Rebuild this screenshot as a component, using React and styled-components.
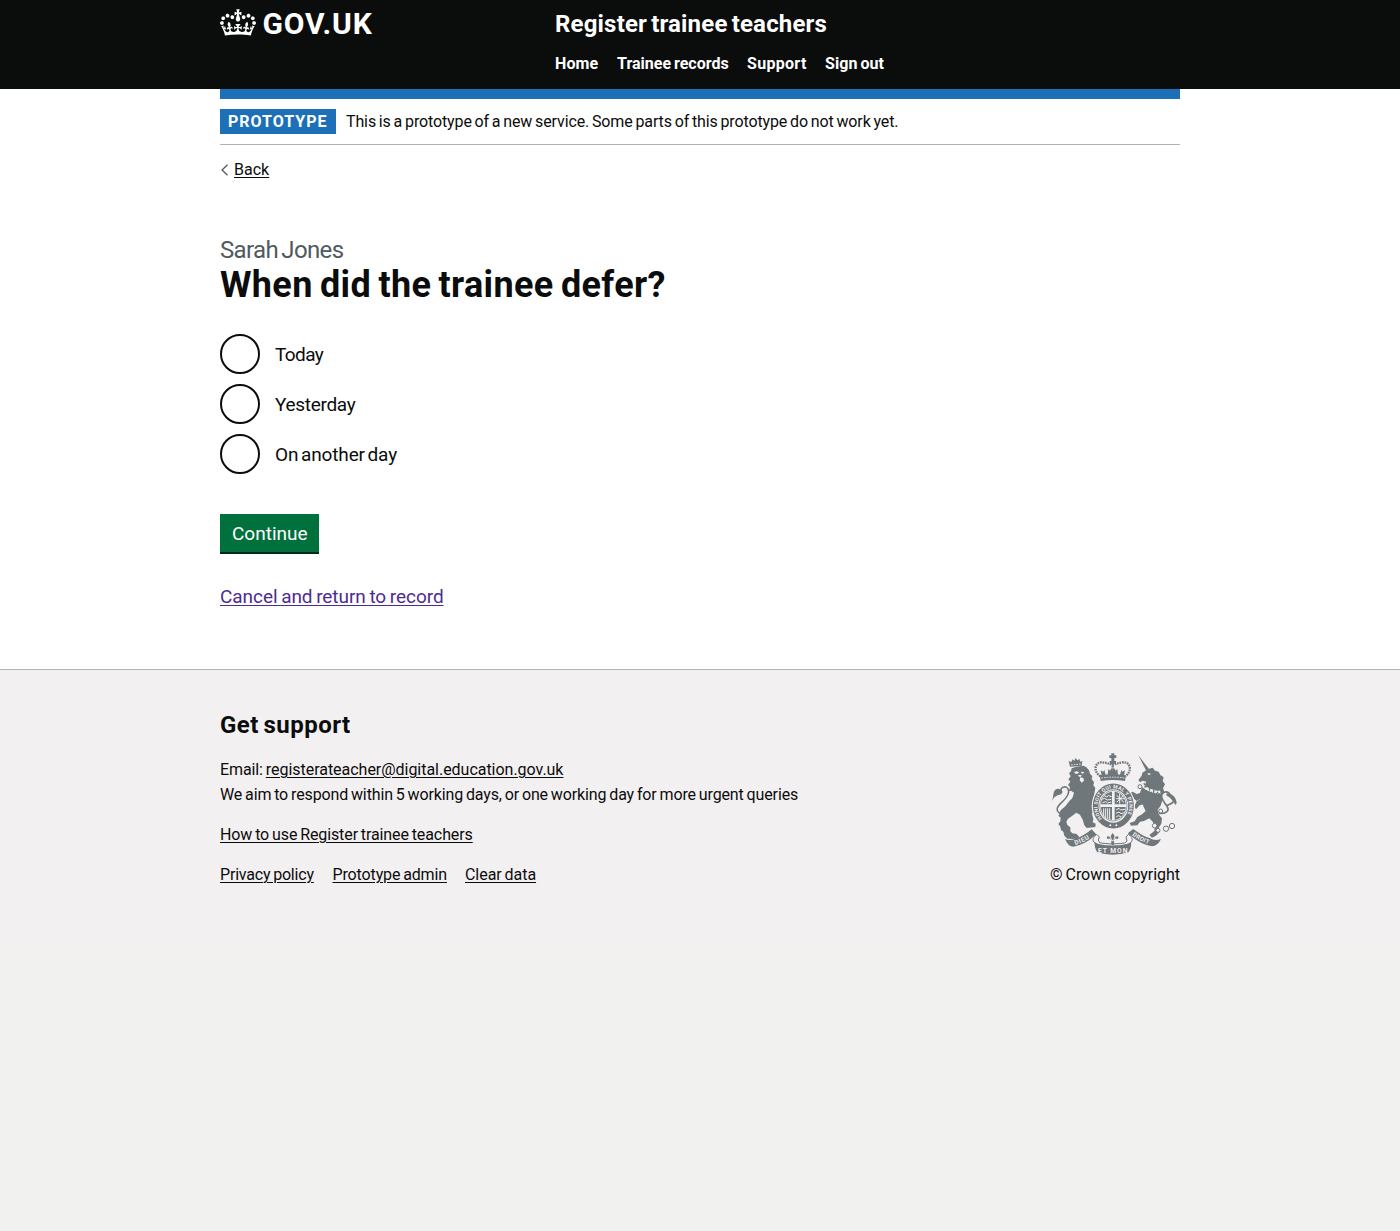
import React from "react";
import styled, { createGlobalStyle } from "styled-components";

const GlobalStyle = createGlobalStyle`
  html { background: #f1f1ef; }
  body {
    margin: 0;
    background: #f1f1ef;
    color: #0b0c0c;
    font-family: Roboto, "Noto Sans", sans-serif;
    -webkit-font-smoothing: antialiased;
  }
  * { box-sizing: border-box; }
`;

const Text = styled.span`
  letter-spacing: ${(p) => p.$track || 0}px;
  word-spacing: ${(p) => p.$word || 0}px;
  white-space: pre;
`;

const Container = styled.div`
  width: 960px;
  margin: 0 auto;
`;

const Header = styled.header`
  height: 89px;
  background: #0b0c0c;
  color: #fff;
`;

const HeaderRow = styled(Container)`
  display: grid;
  grid-template-columns: 335px 1fr;
`;

const Logo = styled.a`
  display: flex;
  align-items: flex-start;
  gap: 6.5px;
  padding-top: 9px;
  color: #fff;
  text-decoration: none;
  svg { display: block; }
`;

const LogoType = styled(Text)`
  font: 700 30px/30px Roboto, sans-serif;
`;

const ServiceName = styled(Text)`
  display: block;
  padding-top: 9px;
  font-size: 24px;
  line-height: 30px;
  font-weight: 700;
`;

const Nav = styled.nav`
  display: flex;
  padding-top: 15px;
  font-size: 16px;
  line-height: 20px;
  font-weight: 700;
`;

const NavItem = styled.a`
  width: ${(p) => p.$w}px;
  color: #fff;
  text-decoration: none;
`;

const Main = styled.div`
  background: #fff;
  height: 580px;
`;

const BlueBar = styled.div`
  height: 10px;
  background: #1d70b8;
`;

const PhaseBanner = styled.div`
  display: flex;
  align-items: center;
  gap: 10px;
  height: 46px;
  border-bottom: 1px solid #b1b4b6;
  font-size: 16px;
  line-height: 20px;
`;

const Tag = styled.strong`
  width: 116px;
  height: 25px;
  padding-left: 8px;
  background: #1d70b8;
  color: #fff;
  line-height: 25px;
`;

const Link = styled.a`
  color: ${(p) => p.$color || "#0b0c0c"};
  text-decoration: underline;
  text-decoration-thickness: 1px;
  text-underline-offset: 2px;
`;

const BackRow = styled.div`
  display: flex;
  align-items: center;
  gap: 5px;
  margin-top: 15px;
  height: 20px;
  font-size: 16px;
  line-height: 20px;
`;

const Caption = styled.span`
  display: block;
  margin-top: 55px;
  color: #505a5f;
  font-size: 24px;
  line-height: 30px;
`;

const Title = styled.h1`
  margin: 0 0 29px;
  font-size: 36px;
  line-height: 40px;
  font-weight: 700;
`;

const Radios = styled.div`
  display: flex;
  flex-direction: column;
  gap: 10px;
`;

const Radio = styled.label`
  display: flex;
  align-items: center;
  gap: 15px;
  font-size: 19px;
  line-height: 25px;
`;

const RadioRing = styled.span`
  width: 40px;
  height: 40px;
  border: 2px solid #0b0c0c;
  border-radius: 50%;
`;

const Button = styled.button`
  display: block;
  width: 99px;
  height: 38px;
  margin: 40px 0 0;
  padding: 1px 0 0 12px;
  border: 0;
  background: #00703c;
  box-shadow: 0 2px 0 #002d18;
  color: #fff;
  font: 400 19px/38px Roboto, sans-serif;
  text-align: left;
`;

const CancelRow = styled.p`
  margin: 32px 0 0;
  font-size: 19px;
  line-height: 25px;
`;

const Footer = styled.footer`
  height: 283px;
  border-top: 1px solid #b1b4b6;
  background: #f3f0f1;
`;

const FooterRow = styled(Container)`
  display: flex;
  justify-content: space-between;
  align-items: flex-end;
  height: 217px;
  font-size: 16px;
`;

const FooterHeading = styled.h2`
  margin: 0 0 17px;
  font-size: 24px;
  line-height: 30px;
`;

const FooterText = styled.p`
  margin: 0 0 15px;
  line-height: 25px;
`;

const FooterLinks = styled.div`
  display: flex;
  line-height: 25px;
`;

const FooterItem = styled.span`
  width: ${(p) => p.$w}px;
`;

const Copyright = styled.div`
  display: flex;
  flex-direction: column;
  align-items: flex-end;
  line-height: 25px;
  svg { display: block; margin: 0 3px 7px 0; }
`;

function Crown() {
  return (
    <svg width="36" height="27" viewBox="0 0 132 97" fill="#fff" aria-hidden="true">
      <path d="M25 30.2c3.5 1.5 7.7-.2 9.1-3.7 1.5-3.6-.2-7.8-3.9-9.2-3.6-1.4-7.6.3-9.1 3.9-1.4 3.5.3 7.5 3.9 9zM9 39.5c3.6 1.5 7.8-.2 9.2-3.7 1.5-3.6-.2-7.8-3.9-9.1-3.6-1.5-7.6.2-9.1 3.8-1.4 3.5.3 7.5 3.8 9zM4.4 57.2c3.5 1.5 7.7-.2 9.1-3.8 1.5-3.6-.2-7.7-3.9-9.1-3.5-1.5-7.6.3-9.1 3.8-1.4 3.5.3 7.6 3.9 9.1zm38.3-21.4c3.5 1.5 7.7-.2 9.1-3.8 1.5-3.6-.2-7.7-3.9-9.1-3.6-1.5-7.6.3-9.1 3.8-1.3 3.6.4 7.7 3.9 9.1zm64.4-5.6c-3.6 1.5-7.8-.2-9.1-3.7-1.5-3.6.2-7.8 3.8-9.2 3.6-1.4 7.7.3 9.2 3.9 1.3 3.5-.4 7.5-3.9 9zm15.9 9.3c-3.6 1.5-7.7-.2-9.1-3.7-1.5-3.6.2-7.8 3.7-9.1 3.6-1.5 7.7.2 9.2 3.8 1.5 3.5-.3 7.5-3.8 9zm4.7 17.7c-3.6 1.5-7.8-.2-9.2-3.8-1.5-3.6.2-7.7 3.9-9.1 3.6-1.5 7.7.3 9.2 3.8 1.3 3.5-.4 7.6-3.9 9.1zM89.3 35.8c-3.6 1.5-7.8-.2-9.2-3.8-1.4-3.6.2-7.7 3.9-9.1 3.6-1.5 7.7.3 9.2 3.8 1.4 3.6-.3 7.7-3.9 9.1zM69.7 17.7l8.9 4.7V9.3l-8.9 2.8c-.2-.3-.5-.6-.9-.9L72.4 0H59.6l3.5 11.2c-.3.3-.6.5-.9.9l-8.8-2.8v13.1l8.8-4.7c.3.3.6.7.9.9l-5 15.4v.1c-.2.8-.4 1.6-.4 2.4 0 4.1 3.1 7.5 7 8.1h.2c.3 0 .7.1 1 .1.4 0 .7 0 1-.1h.2c4-.6 7.1-4.1 7.1-8.1 0-.8-.1-1.7-.4-2.4V34l-5.1-15.4c.4-.2.7-.6 1-.9zM66 92.8c16.9 0 32.8 1.1 47.1 3.2 4-16.9 8.9-26.7 14-33.5l-9.6-3.4c1 4.9 1.1 7.2 0 10.2-1.5-1.4-3-4.3-4.2-8.7L108.6 76c2.8-2 5-3.2 7.5-3.3-4.4 9.4-10 11.9-13.6 11.2-4.3-.8-6.3-4.6-5.6-7.9 1-4.7 5.7-5.9 8-.5 4.3-8.7-3-11.4-7.6-8.8 7.1-7.2 7.9-13.5 2.1-21.1-8 6.1-8.1 12.3-4.5 20.8-4.7-5.4-12.1-2.5-9.5 6.2 3.4-5.2 7.9-2 7.2 3.1-.6 4.3-6.4 7.8-13.5 7.2-10.3-.9-10.9-8-11.2-13.8 2.5-.5 7.1 1.8 11 7.3L80.2 60c-4.1 4.4-8 5.3-12.3 5.4 1.4-4.4 8-11.6 8-11.6H55.5s6.4 7.2 7.9 11.6c-4.2-.1-8-1-12.3-5.4l1.4 16.4c3.9-5.5 8.5-7.7 10.9-7.3-.3 5.8-.9 12.8-11.1 13.8-7.2.6-12.9-2.9-13.5-7.2-.7-5 3.8-8.3 7.1-3.1 2.7-8.7-4.6-11.6-9.4-6.2 3.7-8.5 3.6-14.7-4.6-20.8-5.8 7.6-5 13.9 2.2 21.1-4.7-2.6-11.9.1-7.7 8.8 2.3-5.5 7.1-4.2 8.1.5.7 3.3-1.3 7.1-5.7 7.9-3.5.7-9-1.8-13.5-11.2 2.5.1 4.7 1.3 7.5 3.3l-4.7-15.4c-1.2 4.4-2.7 7.2-4.3 8.7-1.1-3-.9-5.3 0-10.2l-9.5 3.4c5 6.9 9.9 16.7 14 33.5 14.8-2.1 30.8-3.2 47.7-3.2z" />
    </svg>
  );
}

const INK = "#6f777b";
const PAPER = "#f3f0f1";

function Crest() {
  return (
    <svg width="125" height="102" viewBox="36 24 375 306" aria-hidden="true">
      <defs>
        <path id="garter" d="M186 221A47.500 53.500 0 1 1 254 221" />
        <path id="dieu" d="M106 300Q134 292 162 271" />
        <path id="droit" d="M276 271Q304 292 338 300" />
      </defs>
      <g fill={INK}>
        {/* lion */}
        <path d="M95 70L109 65 131 62 139 67 147 76 150 86 157 94 155 102 162 112 160 121 166 129 164 141 160 161 163 181 160 195 156 207 160 222 158 232 167 236 166 246 140 249 133 241 128 224 120 209 109 203 96 213 84 221 79 230 82 240 91 247 91 259 97 265 110 267 117 275 111 282 82 281 73 272 70 260 63 255 61 245 55 237 61 229 62 218 55 212 63 203 69 192 82 182 92 170 98 157 102 143 93 137 86 139 90 127 84 120 91 110 85 103 92 94 87 85 93 79z" />
        <path d="M101 156L88 168 76 184 62 196 57 206 62 214 74 210 85 199 104 186z" />
        <path d="M90 65l-4-18 8 5 3-9 6 4 4-8 5 7 7-4 1 8 7-2-2 15z" />
        <path d="M36 173c3-16 12-22 28-25l4-8c-6-12-24-12-27 3z" />
        <path d="M90 204c-22 6-42 1-38-15 4-14 25-22 32-41 6-16-4-24-13-22-8 2-9 9-8 15" fill="none" stroke={INK} strokeWidth="4.500" />
        {/* unicorn */}
        <path d="M295 31l32 41-8 6z" />
        <path d="M325 72L338 68 345 77 356 80 361 90 371 97 368 108 375 118 369 130 374 143 363 149 367 165 362 182 353 194 356 208 366 220 364 236 356 248 358 262 348 272 336 278 328 270 343 258 345 244 338 230 328 220 312 228 300 230 292 241 273 242 269 234 284 229 292 216 306 208 317 198 311 186 306 172 299 163 290 168 278 158 270 150 264 146 278 140 290 147 300 144 304 132 312 124 319 110 308 107 300 112 295 105 305 92 307 83 316 77z" />
        <path d="M307 160L290 169 283 184 288 193 299 181 316 177z" />
        <path d="M410 173c-2-13-8-23-22-27-9-5-12 4-5 8 9 4 14 14 24 26z" />
        <path d="M356 205c25 2 34-9 24-23-16-20-22-35-5-41 8-2 13 3 16 9M380 182c8-4 16-6 20-12" fill="none" stroke={INK} strokeWidth="5" />
        {/* royal crown */}
        <path d="M179 91q39-7 79 0l-3 17q-36-6-73 0z" />
        <path d="M205 72l5 5 4-7 4 7 5-7 4 7 5-5 2 18h-31zM182 76l8 4 3-6 4 16-12 2zM255 76l-8 4-3-6-4 16 12 2z" />
        <path d="M214 25h9v6h6v8h-6v9h5v8h-19v-8h5v-9h-6v-8h6z" />
      </g>
      <g fill="none" stroke={INK}>
        <path d="M181 94C156 76 167 49 188 52c12 1 19 5 30 7 11-2 18-6 30-7 21-3 32 24 8 42" strokeWidth="7" strokeDasharray="5 2.500" />
        <path d="M218 55v34" strokeWidth="7" strokeDasharray="5 2.500" />
      </g>
      <g fill={PAPER}>
        <path d="M102 81l9-2 6 3-4 4h-7zM124 80l9 1-4 5-6-2zM114 90h11l-2 5h-6zM121 97l9 2 2 8-7 6-6-7z" />
        <path d="M326 84l7 3-6 3-5-3z" />
      </g>
      <path d="M184 99q35-5 70 0M93 60l30-3" fill="none" stroke={PAPER} strokeWidth="2.500" strokeDasharray="5 3" />
      <path d="M306 121q24 21 55 21" fill="none" stroke={PAPER} strokeWidth="10" />
      <path d="M303 126q24 20 56 20M312 114l4 14 9-10 4 16 10-11 2 16 11-11 1 16" fill="none" stroke={INK} strokeWidth="4" strokeDasharray="6 2" />
      {/* garter and arms */}
      <ellipse cx="220" cy="183" rx="65" ry="71" fill={PAPER} />
      <ellipse cx="220" cy="183" rx="53" ry="59" fill="none" stroke={INK} strokeWidth="17" />
      <ellipse cx="220" cy="182" rx="41" ry="46" fill={PAPER} stroke={INK} strokeWidth="2" />
      <g fill={INK}>
        <path d="M216 140v38h-33c1-21 14-36 33-38zM224 140v38h33c-1-21-14-36-33-38zM183 186h33v38c-19-2-32-17-33-38zM257 186h-33v38c19-2 32-17 33-38z" />
      </g>
      <g fill="none" stroke={PAPER} strokeWidth="3">
        <path d="M192 151l8 5 5-4 10 3M185 163l9-3 8 5 12-2M188 173l9-3 6 4 11-3M230 151l22 21M230 172l20-21M239 145v31M229 161h25M191 190v23M197 190v28M203 190v31M209 190v32M229 194l8-4 5 5 13-2M228 205l9-4 6 5 10-3M229 215l7-3 7 4" />
      </g>
      <text fill={PAPER} fontFamily="Roboto, sans-serif" fontSize="15" fontWeight="700" letterSpacing="1">
        <textPath href="#garter">HONI SOIT QUI MAL Y PENSE</textPath>
      </text>
      <circle cx="211" cy="241" r="3" fill={PAPER} />
      <circle cx="229" cy="241" r="3" fill={PAPER} />
      {/* ribbon */}
      <path d="M75 282q18 7 35-3 21-6 45-26l13 14q3 8-6 7-28 26-62 31-16 0-25-23zM363 282q-20 7-34-3-22-6-49-27l-15 11q-2 10 8 10 31 26 63 31 17 0 27-22z" fill={INK} />
      <path d="M170 268c-10 8-16 18-5 26l14 9q39 9 79 0l13-9c10-9 6-17-5-26l-8 8 3 12q-6 8-15 7-28 4-57 0-13 1-14-10l3-9z" fill={PAPER} stroke={INK} strokeWidth="3" />
      <path d="M164 291c-1 9 1 20 7 30q47 17 95 0c7-10 8-20 7-30-13 13-96 14-109 0z" fill={INK} />
      <path d="M218 264l6 9-4 12h-4l-4-12zM210 276q-13-6-8 6l10-2v5h12v-5l10 2q5-12-8-6l-4 10h-8zM213 289h10l-2 11h-6z" fill={INK} />
      <g fill={PAPER} fontFamily="Roboto, sans-serif" fontWeight="700">
        <text fontSize="20" x="174" y="323" textLength="88">ET MON</text>
        <text fontSize="19" letterSpacing="2"><textPath href="#dieu">DIEU</textPath></text>
        <text fontSize="18" letterSpacing="1"><textPath href="#droit">DROIT</textPath></text>
      </g>
      {/* chain */}
      <g fill={PAPER} stroke={INK} strokeWidth="3">
        <circle cx="344" cy="242" r="7" />
        <circle cx="354" cy="256" r="6" />
        <circle cx="378" cy="251" r="8" />
        <circle cx="396" cy="243" r="8" />
        <circle cx="300" cy="125" r="6" />
        <circle cx="362" cy="198" r="6" />
      </g>
    </svg>
  );
}

const navItems = [["Home", 62, 0.1, 0], ["Trainee records", 130, 0, -1], ["Support", 78, 0.3, 0], ["Sign out", 70, 0.06, -1]];
const options = [["Today", -0.6, 0], ["Yesterday", -0.3, 0], ["On another day", -0.12, -2]];
const footerLinks = [["Privacy policy", 112.5, -0.19], ["Prototype admin", 132.5, -0.13], ["Clear data", 80, -0.05]];

export default function App() {
  return (
    <>
      <GlobalStyle />
      <Header>
        <HeaderRow>
          <Logo><Crown /><LogoType $track={0.9}>GOV.UK</LogoType></Logo>
          <div>
            <ServiceName $track={0.18} $word={-2}>Register trainee teachers</ServiceName>
            <Nav>
              {navItems.map(([label, w, t, ws]) => (
                <NavItem key={label} $w={w}><Text $track={t} $word={ws}>{label}</Text></NavItem>
              ))}
            </Nav>
          </div>
        </HeaderRow>
      </Header>
      <Main>
        <Container>
          <BlueBar />
          <PhaseBanner>
            <Tag><Text $track={1}>PROTOTYPE</Text></Tag>
            <Text $track={-0.125} $word={-1}>This is a prototype of a new service. Some parts of this prototype do not work yet.</Text>
          </PhaseBanner>
          <BackRow>
            <svg width="9" height="12" viewBox="0 0 9 12" fill="none" stroke="#505a5f" strokeWidth="1.3"><path d="M7.5 .8L2 6l5.500 5.200" /></svg>
            <Link><Text>Back</Text></Link>
          </BackRow>
          <Caption><Text $track={-0.64} $word={-2}>Sarah Jones</Text></Caption>
          <Title><Text $track={0.35} $word={-2}>When did the trainee defer?</Text></Title>
          <Radios>
            {options.map(([label, t, ws]) => (
              <Radio key={label}><RadioRing /><Text $track={t} $word={ws}>{label}</Text></Radio>
            ))}
          </Radios>
          <Button><Text>Continue</Text></Button>
          <CancelRow><Link $color="#4c2c92"><Text $track={-0.06} $word={-1}>Cancel and return to record</Text></Link></CancelRow>
        </Container>
      </Main>
      <Footer>
        <FooterRow>
          <div>
            <FooterHeading><Text $track={0.5} $word={-2}>Get support</Text></FooterHeading>
            <FooterText>
              <Text $track={-0.1} $word={-1}>Email: </Text><Link><Text $track={-0.03}>registerateacher@digital.education.gov.uk</Text></Link><br />
              <Text $track={-0.12} $word={-1}>We aim to respond within 5 working days, or one working day for more urgent queries</Text>
            </FooterText>
            <FooterText><Link><Text $track={-0.1} $word={-1}>How to use Register trainee teachers</Text></Link></FooterText>
            <FooterLinks>
              {footerLinks.map(([label, w, t]) => (
                <FooterItem key={label} $w={w}><Link><Text $track={t} $word={-1}>{label}</Text></Link></FooterItem>
              ))}
            </FooterLinks>
          </div>
          <Copyright><Crest /><Text $track={-0.03} $word={-1}>© Crown copyright</Text></Copyright>
        </FooterRow>
      </Footer>
    </>
  );
}
